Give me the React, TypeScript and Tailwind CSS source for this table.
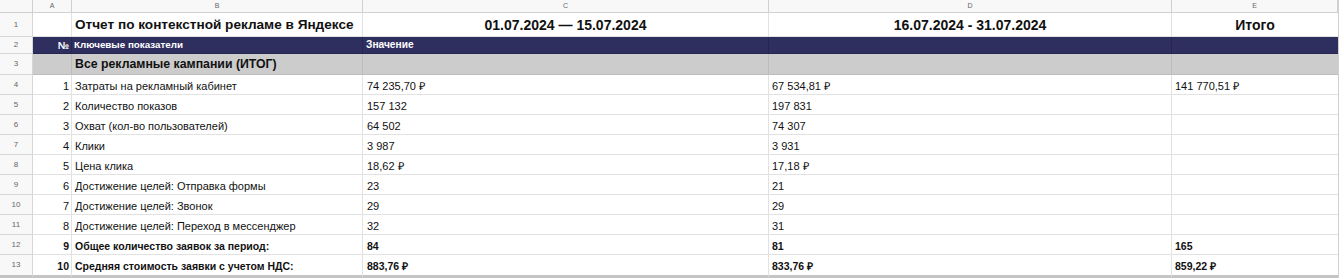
import React from "react";

const COLS = "grid-cols-[33px_39px_291px_406px_403px_166px]";

type Row = { n: number; label: string; c: string; d: string; e: string; bold?: boolean };

const rows: Row[] = [
  { n: 1, label: "Затраты на рекламный кабинет", c: "74 235,70 ₽", d: "67 534,81 ₽", e: "141 770,51 ₽" },
  { n: 2, label: "Количество показов", c: "157 132", d: "197 831", e: "" },
  { n: 3, label: "Охват (кол-во пользователей)", c: "64 502", d: "74 307", e: "" },
  { n: 4, label: "Клики", c: "3 987", d: "3 931", e: "" },
  { n: 5, label: "Цена клика", c: "18,62 ₽", d: "17,18 ₽", e: "" },
  { n: 6, label: "Достижение целей: Отправка формы", c: "23", d: "21", e: "" },
  { n: 7, label: "Достижение целей: Звонок", c: "29", d: "29", e: "" },
  { n: 8, label: "Достижение целей: Переход в мессенджер", c: "32", d: "31", e: "" },
  { n: 9, label: "Общее количество заявок за период:", c: "84", d: "81", e: "165", bold: true },
  { n: 10, label: "Средняя стоимость заявки с учетом НДС:", c: "883,76 ₽", d: "833,76 ₽", e: "859,22 ₽", bold: true },
];

const font = { fontFamily: '"Liberation Sans", Arial, sans-serif' };

function RowNum({ n, h }: { n: number; h: string }) {
  return (
    <div className={`${h} flex items-center justify-center border-r border-b border-[#d6d6d6] bg-[#f8f8f8] text-[8px] text-[#666]`}>
      {n}
    </div>
  );
}

export default function App() {
  return (
    <div className="w-[1340px] h-[279px] bg-white overflow-hidden text-[#111]" style={font}>
      <div className={`grid ${COLS} w-[1339px] border-r border-[#d0d0d0]`}>
        {/* column letters */}
        <div className="h-[13px] border-r border-b border-[#d0d0d0] bg-[#f8f8f8]" />
        {["A", "B", "C", "D", "E"].map((l) => (
          <div key={l} className="h-[13px] flex items-center justify-center border-r border-b border-[#d0d0d0] bg-[#f8f8f8] text-[7px] text-[#666]">
            {l}
          </div>
        ))}

        {/* row 1 */}
        <RowNum n={1} h="h-[24px]" />
        <div className="h-[24px] border-r border-b border-[#e2e2e2]" />
        <div className="h-[24px] flex items-center pl-[3px] pt-[1px] border-r border-b border-[#e2e2e2] text-[13.6px] font-bold whitespace-nowrap">
          Отчет по контекстной рекламе в Яндексе
        </div>
        <div className="h-[24px] flex items-center justify-center pt-[1px] border-r border-b border-[#e2e2e2] text-[14px] font-bold">
          01.07.2024 — 15.07.2024
        </div>
        <div className="h-[24px] flex items-center justify-center pt-[1px] border-r border-b border-[#e2e2e2] text-[14px] font-bold">
          16.07.2024 - 31.07.2024
        </div>
        <div className="h-[24px] flex items-center justify-center pt-[1px] border-b border-[#e2e2e2] text-[14px] font-bold">
          Итого
        </div>

        {/* row 2 navy */}
        <RowNum n={2} h="h-[17px]" />
        <div className="h-[17px] flex items-center justify-end pr-[2px] bg-[#2f2f5f] border-r border-b border-[#26264f] text-white text-[10px] font-bold">
          №
        </div>
        <div className="h-[17px] flex items-center pl-[2px] bg-[#2f2f5f] border-r border-b border-[#26264f] text-white text-[9.8px] font-bold">
          Ключевые показатели
        </div>
        <div className="h-[17px] flex items-center pl-[3px] bg-[#2f2f5f] border-r border-b border-[#26264f] text-white text-[10.2px] font-bold">
          Значение
        </div>
        <div className="h-[17px] bg-[#2f2f5f] border-r border-b border-[#26264f]" />
        <div className="h-[17px] bg-[#2f2f5f] border-b border-[#26264f]" />

        {/* row 3 gray */}
        <RowNum n={3} h="h-[21px]" />
        <div className="h-[21px] bg-[#cccccc] border-r border-b border-[#bdbdbd]" />
        <div className="h-[21px] flex items-center pl-[3px] bg-[#cccccc] border-r border-b border-[#bdbdbd] text-[12.3px] font-bold">
          Все рекламные кампании (ИТОГ)
        </div>
        <div className="h-[21px] bg-[#cccccc] border-r border-b border-[#bdbdbd]" />
        <div className="h-[21px] bg-[#cccccc] border-r border-b border-[#bdbdbd]" />
        <div className="h-[21px] bg-[#cccccc] border-b border-[#bdbdbd]" />

        {rows.map((r, i) => {
          const last = i === rows.length - 1;
          const bb = last ? "border-b-[3px] border-b-[#c4c4c4] h-[23px]" : "border-b h-[20px]";
          const txt = r.bold ? "text-[10.5px] font-bold" : "text-[11px]";
          return (
            <React.Fragment key={r.n}>
              <div className={`${bb} flex items-center justify-center border-r border-[#d6d6d6] bg-[#f8f8f8] text-[8px] text-[#666]`}>
                {r.n + 3}
              </div>
              <div className={`${bb} flex items-center justify-end pr-[2px] pt-[4px] border-r border-[#e2e2e2] ${txt}`}>
                {r.n}
              </div>
              <div className={`${bb} flex items-center pl-[3px] pt-[4px] border-r border-[#e2e2e2] whitespace-nowrap ${txt}`}>
                {r.label}
              </div>
              <div className={`${bb} flex items-center pl-[4px] pt-[4px] border-r border-[#e2e2e2] ${txt}`}>{r.c}</div>
              <div className={`${bb} flex items-center pl-[3px] pt-[4px] border-r border-[#e2e2e2] ${txt}`}>{r.d}</div>
              <div className={`${bb} flex items-center pl-[3px] pt-[4px] border-[#e2e2e2] ${txt}`}>{r.e}</div>
            </React.Fragment>
          );
        })}
      </div>
    </div>
  );
}
